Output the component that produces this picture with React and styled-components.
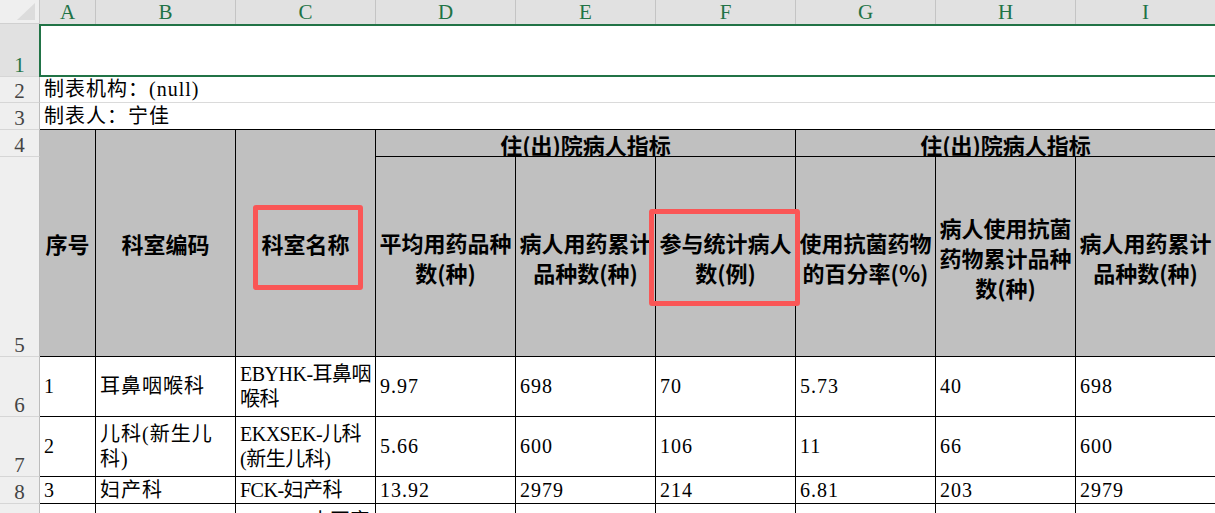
import React from "react";
import styled, { createGlobalStyle } from "styled-components";

const GREEN = "#217346";
const SERIF = `"Liberation Serif", "Noto Sans CJK SC", serif`;
const HEAD_FONT = `"Noto Sans CJK SC", "Noto Sans", sans-serif`;

const Global = createGlobalStyle`
  *, *::before, *::after { box-sizing: border-box; }
  html, body { margin: 0; padding: 0; background: #fff; overflow: hidden; }
  body { width: 1215px; height: 513px; }
`;

const Sheet = styled.div`
  position: relative;
  display: grid;
  grid-template-columns: 40px 56px repeat(8, 140px);
  grid-template-rows: 24px 53px 26px 27px 27px 200px 60px 60px 27px 85px;
  font-family: ${SERIF};
  color: #000;
`;

const Corner = styled.div`
  position: relative;
  background: #efefef;
  border-right: 1px solid #c8c8c8;
  border-bottom: 1px solid #d0d0d0;
  &::after {
    content: "";
    position: absolute;
    right: 4px;
    bottom: 3px;
    border-left: 18px solid transparent;
    border-bottom: 17px solid #dcdcdc;
  }
`;

const ColHead = styled.div`
  display: flex;
  align-items: center;
  justify-content: center;
  background: #e1e1e1;
  border-right: 1px solid #c4c4c4;
  color: ${GREEN};
  font-size: 21px;
  line-height: 24px;
`;

const RowHead = styled.div`
  display: flex;
  align-items: flex-end;
  justify-content: center;
  padding-bottom: 1px;
  background: ${(p) => (p.$active ? "#e1e1e1" : "#efefef")};
  color: ${(p) => (p.$active ? GREEN : "#444")};
  border-right: 1px solid #bcbcbc;
  border-bottom: 1px solid #d6d6d6;
  font-size: 21px;
  line-height: 20px;
`;

const SelectedRow = styled.div`
  grid-column: 2 / -1;
  margin-left: -1px;
  background: #fff;
  border: 2px solid ${GREEN};
  border-right: none;
`;

const InfoCell = styled.div`
  grid-column: 2 / -1;
  display: flex;
  align-items: center;
  padding-left: 4px;
  background: #fff;
  font-size: 20px;
  line-height: 25px;
  letter-spacing: 1px;
  white-space: nowrap;
  border-bottom: 1px solid ${(p) => (p.$closing ? "#000" : "#dadada")};
`;

const HeadCell = styled.div`
  grid-row: span ${(p) => p.$rows || 1};
  grid-column: span ${(p) => p.$cols || 1};
  display: flex;
  align-items: center;
  justify-content: center;
  padding: ${(p) => (p.$group ? "2px 2px 0" : "0 2px")};
  background: #c0c0c0;
  border-right: 1px solid #000;
  border-bottom: 1px solid #000;
  font-family: ${HEAD_FONT};
  font-weight: 700;
  font-size: 22px;
  line-height: ${(p) => (p.$group ? "22px" : "30px")};
  text-align: center;
`;

const DataCell = styled.div`
  display: flex;
  align-items: center;
  padding-left: 4px;
  background: #fff;
  border-right: 1px solid #000;
  border-bottom: 1px solid #000;
  font-size: 20px;
  line-height: 25px;
  letter-spacing: ${(p) => (p.$tight ? "-0.5px" : "1px")};
  white-space: pre;
`;

const Highlight = styled.div`
  position: absolute;
  left: ${(p) => p.$x}px;
  top: ${(p) => p.$y}px;
  width: ${(p) => p.$w}px;
  height: ${(p) => p.$h}px;
  border: 5px solid #fa5656;
  border-radius: 3px;
  pointer-events: none;
`;

const columns = ["A", "B", "C", "D", "E", "F", "G", "H", "I"];

const subHeads = [
  "平均用药品种数(种)",
  "病人用药累计品种数(种)",
  "参与统计病人数(例)",
  "使用抗菌药物的百分率(%)",
  "病人使用抗菌药物累计品种数(种)",
  "病人用药累计品种数(种)",
];

const rows = [
  { n: 6, cells: ["1", "耳鼻咽喉科", "EBYHK-耳鼻咽\n喉科", "9.97", "698", "70", "5.73", "40", "698"] },
  { n: 7, cells: ["2", "儿科(新生儿\n科)", "EKXSEK-儿科\n(新生儿科)", "5.66", "600", "106", "11", "66", "600"] },
  { n: 8, cells: ["3", "妇产科", "FCK-妇产科", "13.92", "2979", "214", "6.81", "203", "2979"] },
  { n: 9, cells: ["4", "中医康复与针\n灸推拿科", "ZYKFK-中医康\n复与针灸推拿\n科", "8.45", "512", "61", "9.84", "37", "512"] },
];

export default function App() {
  return (
    <>
      <Global />
      <Sheet>
        <Corner />
        {columns.map((c) => (
          <ColHead key={c}>{c}</ColHead>
        ))}

        <RowHead $active>1</RowHead>
        <SelectedRow />

        <RowHead>2</RowHead>
        <InfoCell>制表机构：(null)</InfoCell>

        <RowHead>3</RowHead>
        <InfoCell $closing>制表人：宁佳</InfoCell>

        <RowHead>4</RowHead>
        <HeadCell $rows={2}>序号</HeadCell>
        <HeadCell $rows={2}>科室编码</HeadCell>
        <HeadCell $rows={2}>科室名称</HeadCell>
        <HeadCell $cols={3} $group>住(出)院病人指标</HeadCell>
        <HeadCell $cols={3} $group>住(出)院病人指标</HeadCell>

        <RowHead>5</RowHead>
        {subHeads.map((h, i) => (
          <HeadCell key={i}>{h}</HeadCell>
        ))}

        {rows.map((r) => (
          <React.Fragment key={r.n}>
            <RowHead>{r.n}</RowHead>
            {r.cells.map((v, i) => (
              <DataCell key={i} $tight={i === 2}>{v}</DataCell>
            ))}
          </React.Fragment>
        ))}

        <Highlight $x={253} $y={205} $w={110} $h={85} />
        <Highlight $x={649} $y={209} $w={151} $h={97} />
      </Sheet>
    </>
  );
}
